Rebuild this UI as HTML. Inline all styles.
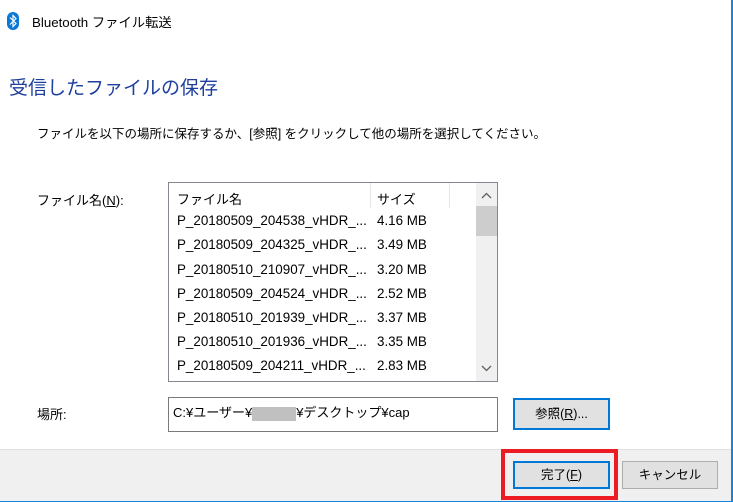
<!DOCTYPE html>
<html><head><meta charset="utf-8"><style>
*{margin:0;padding:0;box-sizing:border-box}
body{width:733px;height:502px;background:#fff;font-family:"Liberation Sans","Noto Sans CJK JP",sans-serif;font-size:12.5px;color:#000;position:relative;overflow:hidden}
.a{position:absolute;white-space:nowrap}
.btn{position:absolute;background:#e1e1e1;border:1px solid #adadad;text-align:center;font-size:12.5px}
.row{position:absolute;left:8px;font-size:13.4px}
.sz{position:absolute;left:208px;font-size:13.4px}
</style></head><body>
<svg class="a" style="left:7px;top:12px" width="12" height="18" viewBox="0 0 12 18"><rect x="0" y="0" width="12" height="18" rx="6" fill="#0a78d7"/><path d="M3 5.5l6 6-3 3V3.5l3 3-6 6" stroke="#fff" stroke-width="1.2" fill="none"/></svg>
<div class="a" style="left:32px;top:12px;font-size:13.3px">Bluetooth ファイル転送</div>
<div class="a" style="left:9px;top:73px;font-size:19px;color:#1e3f9e">受信したファイルの保存</div>
<div class="a" style="left:37px;top:123px;font-size:12.5px">ファイルを以下の場所に保存するか、[参照] をクリックして他の場所を選択してください。</div>
<div class="a" style="left:37px;top:190px;font-size:13px">ファイル名(<u>N</u>):</div>
<div class="a" style="left:168px;top:182px;width:330px;height:200px;border:1px solid #828790">
 <div class="a" style="left:8px;top:6px;font-size:13px">ファイル名</div>
 <div class="a" style="left:201px;top:0;width:1px;height:25px;background:#e5e5e5"></div>
 <div class="a" style="left:208px;top:6px;font-size:13px">サイズ</div>
 <div class="a" style="left:280px;top:0;width:1px;height:25px;background:#e5e5e5"></div>
 <div class="a" style="left:307px;top:0;width:21px;height:198px;background:#f0f0f0"></div>
 <div class="a" style="left:307px;top:23px;width:21px;height:30px;background:#cdcdcd"></div>
 <svg class="a" style="left:312px;top:9px" width="11" height="7"><path d="M1 6l4.5-4.5L10 6" stroke="#606060" stroke-width="1.3" fill="none"/></svg>
 <svg class="a" style="left:312px;top:182px" width="11" height="7"><path d="M1 1l4.5 4.5L10 1" stroke="#606060" stroke-width="1.3" fill="none"/></svg>
 <div class="row" style="top:30px">P_20180509_204538_vHDR_...</div><div class="sz" style="top:30px">4.16 MB</div>
 <div class="row" style="top:54px">P_20180509_204325_vHDR_...</div><div class="sz" style="top:54px">3.49 MB</div>
 <div class="row" style="top:79px">P_20180510_210907_vHDR_...</div><div class="sz" style="top:79px">3.20 MB</div>
 <div class="row" style="top:103px">P_20180509_204524_vHDR_...</div><div class="sz" style="top:103px">2.52 MB</div>
 <div class="row" style="top:127px">P_20180510_201939_vHDR_...</div><div class="sz" style="top:127px">3.37 MB</div>
 <div class="row" style="top:151px">P_20180510_201936_vHDR_...</div><div class="sz" style="top:151px">3.35 MB</div>
 <div class="row" style="top:175px">P_20180509_204211_vHDR_...</div><div class="sz" style="top:175px">2.83 MB</div>
</div>
<div class="a" style="left:37px;top:404px;font-size:13px">場所:</div>
<div class="a" style="left:168px;top:397px;width:330px;height:35px;border:1px solid #7a7a7a"><div class="a" style="left:4px;top:4px;font-size:13px">C:¥ユーザー¥<span style="display:inline-block;width:44px;height:14px;background:#c0c0c0;vertical-align:middle"></span>¥デスクトップ¥cap</div></div>
<div class="btn" style="left:513px;top:398px;width:97px;height:32px;border:2px solid #0078d7;line-height:28px">参照(<u>R</u>)...</div>
<div class="a" style="left:0;top:449px;width:733px;height:53px;background:#f0f0f0;border-top:1px solid #e0e0e0"></div>
<div class="btn" style="left:513px;top:461px;width:97px;height:28px;border:2px solid #0078d7;line-height:24px">完了(<u>F</u>)</div>
<div class="btn" style="left:622px;top:461px;width:96px;height:28px;line-height:26px">キャンセル</div>
<div class="a" style="left:501px;top:449px;width:117px;height:51px;border:4px solid #ec1c24"></div>
<div class="a" style="left:731px;top:0;width:2px;height:502px;background:#1883d7"></div>
<div class="a" style="left:0;top:501px;width:733px;height:1px;background:#1883d7"></div>
</body></html>
